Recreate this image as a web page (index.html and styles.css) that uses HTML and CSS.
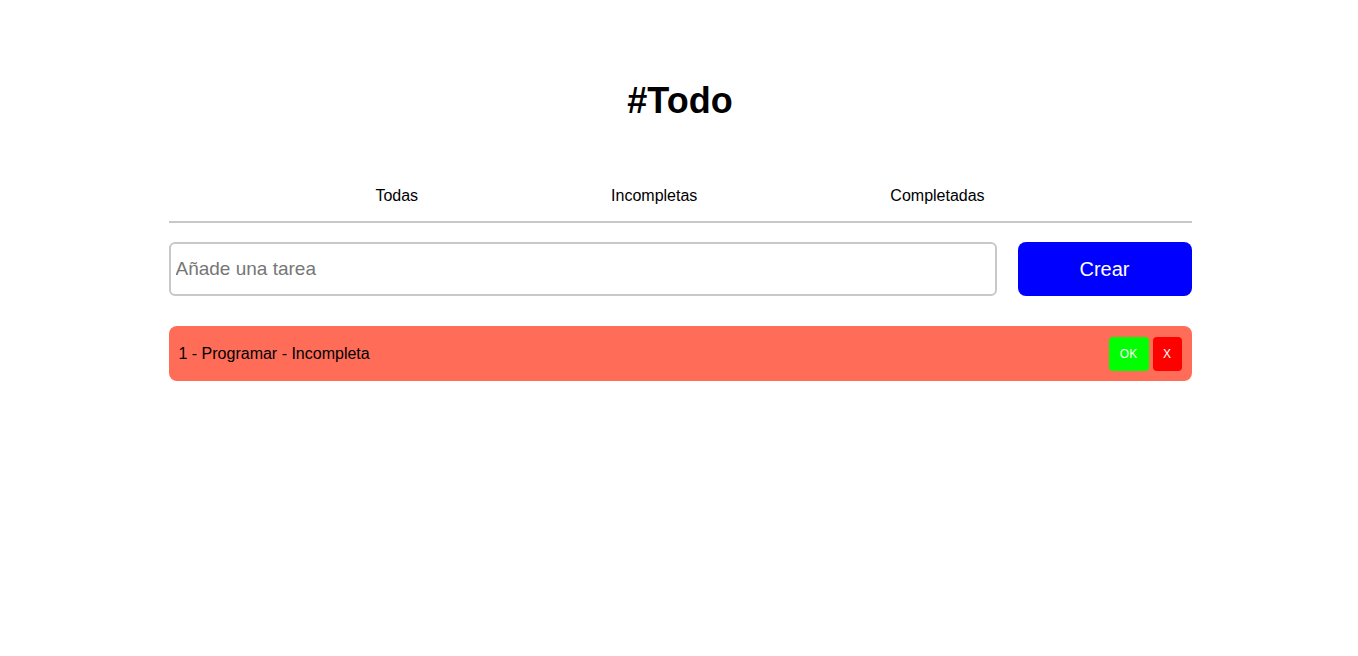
FILE: index.html
```html
<!DOCTYPE html>
<html lang="es">
<head>
<meta charset="utf-8">
<title>#Todo</title>
<link rel="stylesheet" href="styles.css">
</head>
<body>
<main class="app">
  <h1 class="title">#Todo</h1>
  <nav class="tabs">
    <span class="tab">Todas</span>
    <span class="tab">Incompletas</span>
    <span class="tab">Completadas</span>
  </nav>
  <form class="new-task">
    <input class="task-input" type="text" placeholder="Añade una tarea">
    <button class="create-btn" type="button">Crear</button>
  </form>
  <ul class="task-list">
    <li class="task">
      <span class="task-text">1 - Programar - Incompleta</span>
      <div class="task-actions">
        <button class="btn-ok" type="button">OK</button>
        <button class="btn-del" type="button">X</button>
      </div>
    </li>
  </ul>
</main>
</body>
</html>
```

FILE: styles.css
```css
html, body {
  margin: 0;
  padding: 0;
  background: #ffffff;
}

body {
  font-family: "Liberation Sans", Arial, sans-serif;
  color: #000;
}

.app {
  width: 1023px;
  margin: 0 auto;
  padding-top: 80px;
  position: relative;
  left: 1px;
}

.title {
  margin: 0;
  text-align: center;
  font-size: 36px;
  font-weight: bold;
  line-height: 42px;
}

.tabs {
  margin-top: 65px;
  display: flex;
  justify-content: center;
  gap: 193px;
  padding-bottom: 16px;
  border-bottom: 2px solid #c8c8c8;
  font-size: 16px;
  line-height: 18px;
}

.tab {
  cursor: pointer;
}

.new-task {
  margin: 19px 0 0;
  display: flex;
  gap: 21px;
}

.task-input {
  flex: 1;
  height: 54px;
  box-sizing: border-box;
  border: 2px solid #c8c8c8;
  border-radius: 6px;
  padding: 0 5px;
  font-family: "Liberation Sans", Arial, sans-serif;
  font-size: 19px;
  outline: none;
}

.task-input::placeholder {
  color: #767676;
}

.create-btn {
  width: 174px;
  height: 54px;
  border: none;
  border-radius: 8px;
  background: #0000ff;
  color: #fff;
  font-family: "Liberation Sans", Arial, sans-serif;
  font-size: 20px;
}

.task-list {
  list-style: none;
  margin: 30px 0 0;
  padding: 0;
}

.task {
  height: 55px;
  box-sizing: border-box;
  background: #ff6d58;
  border-radius: 8px;
  display: flex;
  align-items: center;
  justify-content: space-between;
  padding: 0 10px;
  font-size: 16px;
}

.task-actions {
  display: flex;
  gap: 4px;
}

.btn-ok,
.btn-del {
  height: 34px;
  border: none;
  border-radius: 4px;
  color: #fff;
  font-family: "Liberation Sans", Arial, sans-serif;
  font-size: 12px;
  padding: 0;
}

.btn-ok {
  width: 40px;
  background: #00ff00;
}

.btn-del {
  width: 29px;
  background: #ff0000;
}
```
